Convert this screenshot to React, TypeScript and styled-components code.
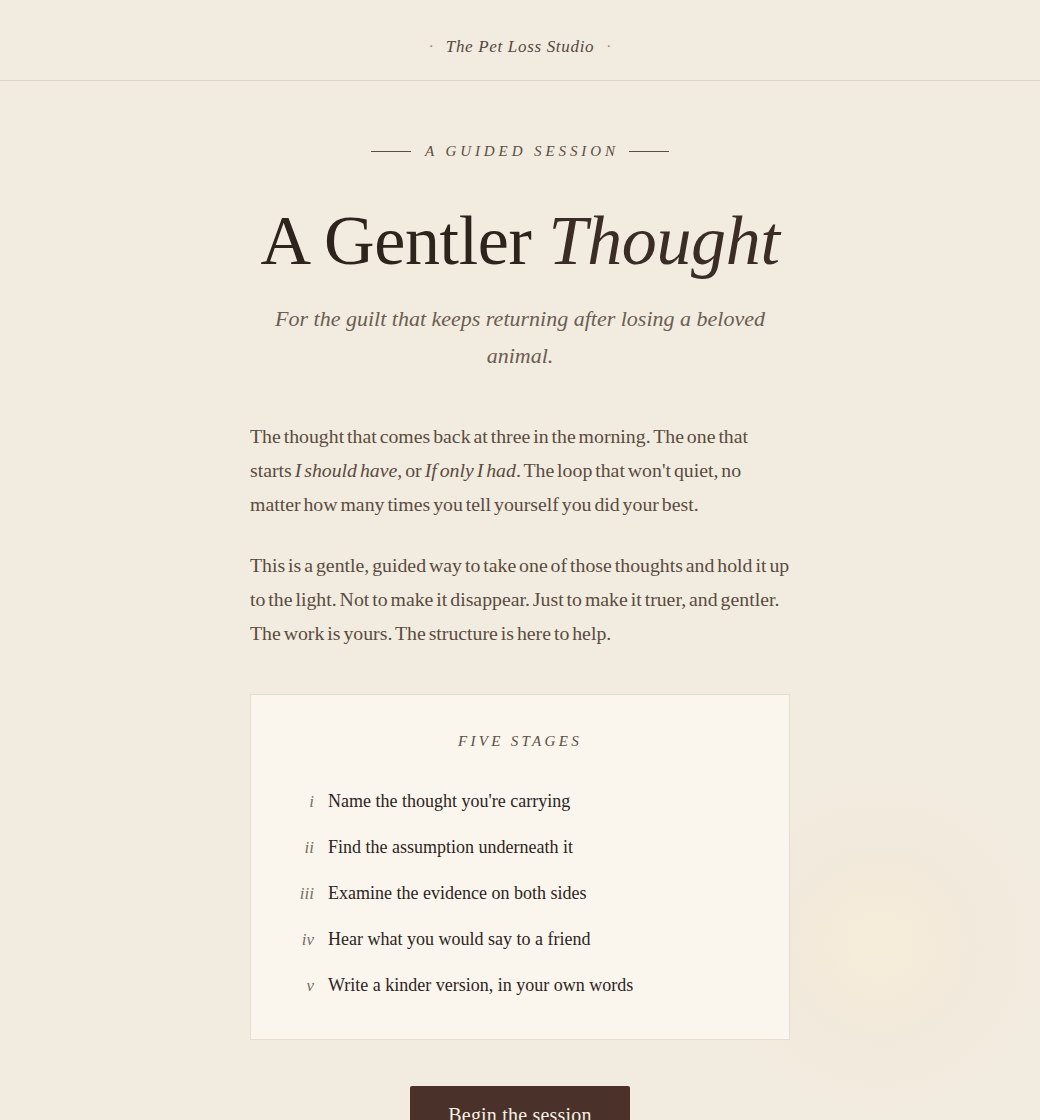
import styled, { createGlobalStyle } from 'styled-components';

const GlobalStyle = createGlobalStyle`
  html, body {
    margin: 0;
    padding: 0;
  }
  body {
    background:
      radial-gradient(circle at 880px 945px, rgba(248, 238, 214, 0.7) 0, rgba(240, 230, 212, 0.4) 90px, rgba(241, 234, 221, 0) 170px),
      #f2ebdf;
    font-family: 'Liberation Serif', 'Times New Roman', serif;
    color: #2e241e;
    min-height: 1120px;
  }
`;

const stages = [
  { num: 'i', text: "Name the thought you're carrying" },
  { num: 'ii', text: 'Find the assumption underneath it' },
  { num: 'iii', text: 'Examine the evidence on both sides' },
  { num: 'iv', text: 'Hear what you would say to a friend' },
  { num: 'v', text: 'Write a kinder version, in your own words' },
];

const App = () => {
  return (
    <>
      <GlobalStyle />
      <TopBar>
        <Dot>·</Dot>
        <Studio>The Pet Loss Studio</Studio>
        <Dot>·</Dot>
      </TopBar>
      <Main>
        <Eyebrow>
          <Rule />
          <span>A Guided Session</span>
          <Rule />
        </Eyebrow>
        <Title>
          A Gentler <em>Thought</em>
        </Title>
        <Subtitle>For the guilt that keeps returning after losing a beloved animal.</Subtitle>

        <Body>
          <p>
            The thought that comes back at three in the morning. The one that starts{' '}
            <em>I should have</em>, or <em>If only I had</em>. The loop that won't quiet, no matter
            how many times you tell yourself you did your best.
          </p>
          <p>
            This is a gentle, guided way to take one of those thoughts and hold it up to the light.
            Not to make it disappear. Just to make it truer, and gentler. The work is yours. The
            structure is here to help.
          </p>
        </Body>

        <StagesCard>
          <CardLabel>Five Stages</CardLabel>
          <StageList>
            {stages.map((s) => (
              <StageItem key={s.num}>
                <Numeral>{s.num}</Numeral>
                <span>{s.text}</span>
              </StageItem>
            ))}
          </StageList>
        </StagesCard>

        <Actions>
          <BeginButton type="button">Begin the session</BeginButton>
        </Actions>
      </Main>
    </>
  );
};

export default App;

const TopBar = styled.header`
  height: 81px;
  border-bottom: 1px solid #dcd3c6;
  display: flex;
  align-items: center;
  justify-content: center;
  gap: 12px;
  padding-top: 13px;
  box-sizing: border-box;
  color: #55483f;
`;

const Studio = styled.span`
  font-style: italic;
  font-size: 17px;
  letter-spacing: 0.04em;
`;

const Dot = styled.span`
  color: #8f8176;
  font-size: 15px;
`;

const Main = styled.main`
  width: 540px;
  margin: 0 auto;
  padding-top: 58px;
  padding-bottom: 40px;
`;

const Eyebrow = styled.div`
  display: flex;
  align-items: center;
  justify-content: center;
  gap: 14px;
  color: #5c4e44;
  font-style: italic;
  font-size: 15px;
  letter-spacing: 0.26em;
  text-transform: uppercase;
  height: 24px;

  span {
    margin-right: -0.26em;
  }
`;

const Rule = styled.i`
  display: block;
  width: 40px;
  height: 1px;
  background: #5c4e44;
`;

const Title = styled.h1`
  margin: 36px -40px 0;
  text-align: center;
  font-weight: 400;
  font-size: 70px;
  line-height: 84px;
  letter-spacing: -0.005em;
  color: #2e241e;

  em {
    font-style: italic;
    color: #3b2d26;
  }
`;

const Subtitle = styled.p`
  margin: 17px auto 0;
  max-width: 520px;
  text-align: center;
  font-style: italic;
  font-size: 22px;
  line-height: 37px;
  color: #6b5d52;
`;

const Body = styled.div`
  margin-top: 45px;
  font-size: 19.8px;
  word-spacing: -2px;
  line-height: 34px;
  color: #5a4b40;

  p {
    margin: 0 0 27px;
  }

  em {
    font-style: italic;
  }
`;

const StagesCard = styled.section`
  margin-top: 44px;
  background: #fbf6ed;
  border: 1px solid #e6ddd0;
  padding: 38px 0 39px;
`;

const CardLabel = styled.h2`
  margin: 0;
  text-align: center;
  font-weight: 400;
  font-style: italic;
  font-size: 15px;
  letter-spacing: 0.22em;
  text-transform: uppercase;
  color: #5c4e44;
`;

const StageList = styled.ol`
  list-style: none;
  margin: 36px 0 0;
  padding: 0 0 0 40px;
  display: flex;
  flex-direction: column;
  gap: 16px;
`;

const StageItem = styled.li`
  display: flex;
  align-items: baseline;
  gap: 14px;
  height: 30px;
  font-size: 18px;
  line-height: 30px;
  color: #2e241e;
`;

const Numeral = styled.span`
  width: 23px;
  text-align: right;
  font-style: italic;
  font-size: 17px;
  line-height: 30px;
  color: #7a6d62;
`;

const Actions = styled.div`
  display: flex;
  justify-content: center;
  margin-top: 46px;
`;

const BeginButton = styled.button`
  width: 220px;
  height: 58px;
  border: none;
  border-radius: 2px;
  background: #4a3129;
  color: #f6efe4;
  font-family: 'Liberation Serif', 'Times New Roman', serif;
  font-size: 20px;
  letter-spacing: 0.01em;
  cursor: pointer;
`;
